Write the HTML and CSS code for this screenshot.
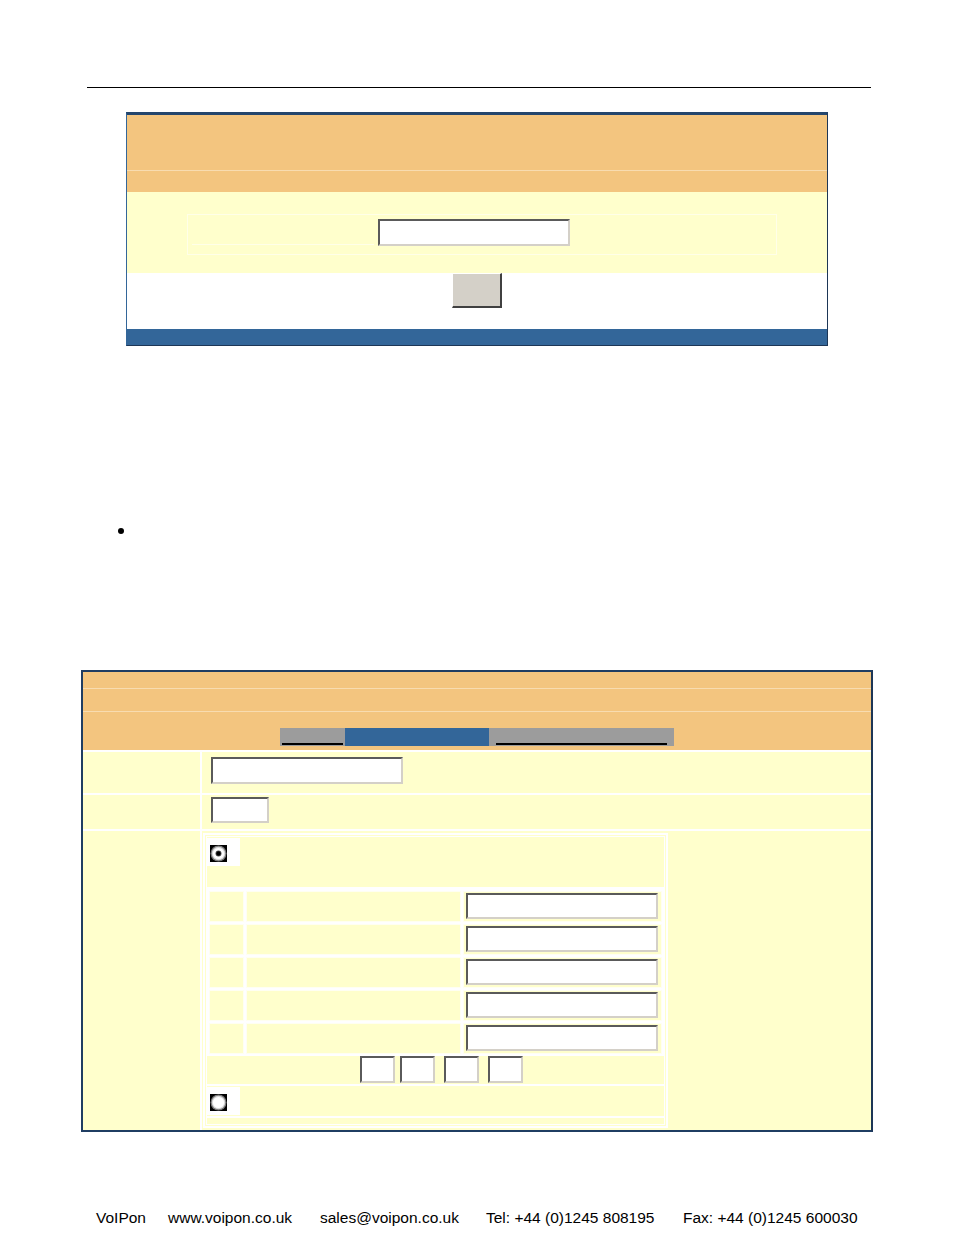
FILE: index.html
```html
<!DOCTYPE html>
<html>
<head>
<meta charset="utf-8">
<link rel="stylesheet" href="styles.css">
</head>
<body>
<div class="page">
  <div class="rule"></div>

  <div class="t1">
    <div class="t1-o1"></div>
    <div class="t1-o2"></div>
    <div class="t1-y">
      <div class="t1-box"></div>
      <div class="t1-line"></div>
      <div class="inp t1-inp"></div>
    </div>
    <div class="t1-w"><div class="btn"></div></div>
    <div class="t1-b"></div>
  </div>

  <div class="bullet"></div>

  <div class="t2">
    <div class="t2-o1"></div>
    <div class="t2-o2"></div>
    <div class="t2-o3">
      <div class="tabs">
        <div class="tab tab-a"><span class="ul ul-a"></span></div>
        <div class="tab tab-b"></div>
        <div class="tab tab-c"><span class="ul ul-c"></span></div>
      </div>
    </div>
    <div class="grid">
      <div class="cell lc r1"></div>
      <div class="cell rc r1"><div class="inp in-r1"></div></div>
      <div class="cell lc r2"></div>
      <div class="cell rc r2"><div class="inp in-r2"></div></div>
      <div class="cell lc r3"></div>
      <div class="cell rc r3">
        <div class="it">
          <div class="it-in">
            <div class="radio-row">
              <div class="radio-cell">
                <svg width="17" height="17" viewBox="0 0 17 17"><rect width="17" height="17" fill="#000"/><circle cx="8.5" cy="8.5" r="8" fill="#7a7a7a"/><circle cx="8.5" cy="8.5" r="6.8" fill="#d8d8d8"/><circle cx="8.5" cy="8.5" r="5.6" fill="#fff"/><circle cx="8.5" cy="8.5" r="3" fill="#555"/><circle cx="8.5" cy="8.5" r="2.2" fill="#000"/></svg>
              </div>
            </div>
            <div class="sub">
              <div class="sc"></div><div class="sc"></div><div class="sc sr"><div class="inp in-s"></div></div>
              <div class="sc"></div><div class="sc"></div><div class="sc sr"><div class="inp in-s"></div></div>
              <div class="sc"></div><div class="sc"></div><div class="sc sr"><div class="inp in-s"></div></div>
              <div class="sc"></div><div class="sc"></div><div class="sc sr"><div class="inp in-s"></div></div>
              <div class="sc"></div><div class="sc"></div><div class="sc sr"><div class="inp in-s"></div></div>
            </div>
            <div class="ip-row">
              <div class="inp ip ip1"></div>
              <div class="inp ip ip2"></div>
              <div class="inp ip ip3"></div>
              <div class="inp ip ip4"></div>
            </div>
            <div class="radio-row2">
              <div class="radio-cell">
                <svg width="17" height="17" viewBox="0 0 17 17"><rect width="17" height="17" fill="#000"/><circle cx="8.5" cy="8.5" r="8" fill="#7a7a7a"/><circle cx="8.5" cy="8.5" r="6.8" fill="#d8d8d8"/><circle cx="8.5" cy="8.5" r="5.6" fill="#fff"/></svg>
              </div>
            </div>
          </div>
        </div>
      </div>
    </div>
  </div>

  <div class="footer">
    <span>VoIPon</span>
    <span>www.voipon.co.uk</span>
    <span>sales@voipon.co.uk</span>
    <span>Tel: +44 (0)1245 808195</span>
    <span>Fax: +44 (0)1245 600030</span>
  </div>
</div>
</body>
</html>
```

FILE: styles.css
```css
html, body {
  margin: 0;
  padding: 0;
  background: #fff;
}
.page {
  width: 954px;
  height: 1235px;
  overflow: hidden;
  font-family: "Liberation Sans", Arial, sans-serif;
}
.rule {
  margin: 87px 0 0 87px;
  width: 784px;
  height: 1px;
  background: #000;
}

/* ---------- first table ---------- */
.t1 {
  margin: 24px 0 0 126px;
  width: 702px;
  box-sizing: border-box;
  border-top: 3px solid #24466d;
  border-left: 1px solid #336699;
  border-right: 1px solid #1d3656;
  border-bottom: 1px solid #1d3656;
}
.t1-o1 {
  height: 55px;
  background: #f3c57f;
  border-bottom: 1px solid #f8dcb0;
}
.t1-o2 {
  height: 21px;
  background: #f3c57f;
}
.t1-y {
  height: 81px;
  background: #ffffcc;
  position: relative;
}
.t1-box {
  position: absolute;
  left: 60px;
  top: 22px;
  width: 588px;
  height: 39px;
  border: 1px solid #ffffe8;
}
.t1-line {
  position: absolute;
  left: 65px;
  top: 52px;
  width: 182px;
  height: 1px;
  background: #ffffe8;
}
.inp {
  background: #fff;
  box-sizing: border-box;
  border-style: solid;
  border-width: 2px;
  border-color: #5a5a5a #d4d0c8 #d4d0c8 #5a5a5a;
}
.t1-inp {
  position: absolute;
  left: 251px;
  top: 27px;
  width: 192px;
  height: 27px;
}
.t1-w {
  height: 56px;
  background: #fff;
}
.btn {
  margin-left: 325px;
  width: 50px;
  height: 35px;
  box-sizing: border-box;
  background: #d4d0c8;
  border-style: solid;
  border-width: 1px 2px 2px 1px;
  border-color: #fff #404040 #404040 #fff;
}
.t1-b {
  height: 16px;
  background: #336699;
}

/* ---------- bullet ---------- */
.bullet {
  margin: 182px 0 0 118px;
  width: 6px;
  height: 6px;
  border-radius: 50%;
  background: #000;
}

/* ---------- second table ---------- */
.t2 {
  margin: 136px 0 0 81px;
  width: 792px;
  box-sizing: border-box;
  border: 2px solid #1f3d62;
  border-right-color: #1d3656;
  border-bottom-color: #1f3d62;
}
.t2-o1 {
  height: 16px;
  background: #f3c57f;
  border-bottom: 1px solid #f8dcb0;
}
.t2-o2 {
  height: 22px;
  background: #f3c57f;
  border-bottom: 1px solid #f8dcb0;
}
.t2-o3 {
  height: 38px;
  background: #f3c57f;
  padding-top: 16px;
  box-sizing: border-box;
}
.tabs {
  display: flex;
  margin-left: 197px;
  height: 18px;
}
.tab {
  height: 18px;
  position: relative;
}
.tab-a { width: 65px; background: #9c9c9c; }
.tab-b { width: 144px; background: #336699; }
.tab-c { width: 185px; background: #9c9c9c; }
.ul {
  position: absolute;
  bottom: 1px;
  height: 2px;
  background: #000;
}
.ul-a { left: 2px; width: 61px; }
.ul-c { left: 7px; width: 171px; }

.grid {
  display: grid;
  grid-template-columns: 117px 1fr;
  grid-template-rows: 41px 34px 299px;
  gap: 2px;
  padding-top: 2px;
  background: #fff;
}
.cell {
  background: #ffffcc;
}
.in-r1 {
  margin: 5px 0 0 9px;
  width: 192px;
  height: 27px;
}
.in-r2 {
  margin: 2px 0 0 9px;
  width: 58px;
  height: 26px;
}

/* inner table */
.it {
  margin: 2px 0 0 1px;
  width: 465px;
  height: 295px;
  box-sizing: border-box;
  border: 2px solid #fff;
  padding: 1px;
}
.it-in {
  height: 100%;
  box-sizing: border-box;
  border: 1px solid #fff;
  padding: 1px 0 0 0;
  display: flex;
  flex-direction: column;
}
.radio-row {
  height: 49px;
  border-bottom: 2px solid #fff;
}
.radio-cell {
  width: 33px;
  height: 28px;
  background: #fff;
  box-sizing: border-box;
  padding: 7px 0 0 3px;
}
.radio-cell svg {
  display: block;
}
.sub {
  display: grid;
  grid-template-columns: 35px 215px 1fr;
  grid-auto-rows: 31px;
  gap: 2px;
  padding: 2px 2px 2px 2px;
  background: #fff;
  width: 457px;
  box-sizing: border-box;
}
.sc {
  background: #ffffcc;
  box-shadow: inset 0 0 0 1px #fffff2;
}
.sr {
  background: #ffffcc;
}
.in-s {
  margin: 2px 0 0 3px;
  width: 192px;
  height: 26px;
}
.ip-row {
  display: flex;
  height: 30px;
  padding-top: 0;
  box-sizing: border-box;
  border-bottom: 2px solid #fff;
}
.ip {
  width: 35px;
  height: 27px;
}
.ip1 { margin-left: 153px; }
.ip2 { margin-left: 5px; }
.ip3 { margin-left: 9px; }
.ip4 { margin-left: 9px; }
.radio-row2 {
  height: 32px;
  padding-top: 1px;
  box-sizing: border-box;
  border-bottom: 2px solid #fff;
}

/* ---------- footer ---------- */
.footer {
  margin-top: 77px;
  padding-left: 96px;
  display: grid;
  grid-template-columns: 72px 152px 166px 197px auto;
  font-size: 15.5px;
  line-height: 18px;
  color: #000;
  white-space: nowrap;
}
```
